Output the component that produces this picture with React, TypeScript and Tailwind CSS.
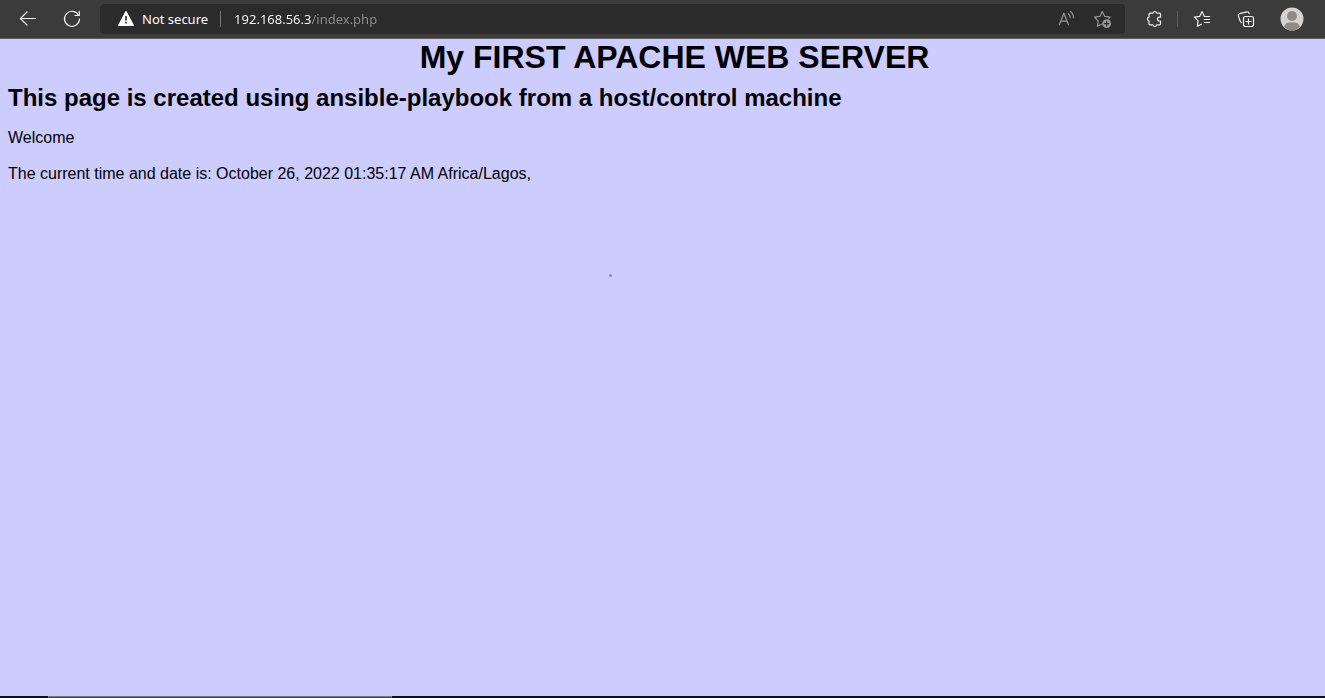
import type { ReactNode } from 'react';

function Icon({ children, size = 24 }: { children: ReactNode; size?: number }) {
  return (
    <svg
      width={size}
      height={size}
      viewBox={`0 0 ${size} ${size}`}
      fill="none"
      stroke="currentColor"
      strokeWidth="1.2"
      strokeLinecap="round"
      strokeLinejoin="round"
      aria-hidden="true"
    >
      {children}
    </svg>
  );
}

function ToolButton({ label, children }: { label: string; children: ReactNode }) {
  return (
    <button type="button" aria-label={label} className="flex h-8 w-10 shrink-0 items-center justify-center rounded text-[#f0f0f0]">
      {children}
    </button>
  );
}

function FieldButton({ label, children }: { label: string; children: ReactNode }) {
  return (
    <button type="button" aria-label={label} className="flex h-7 w-9 shrink-0 items-center justify-center rounded text-[#989898]">
      {children}
    </button>
  );
}

function Toolbar() {
  return (
    <header className="flex h-[39px] items-center border-b border-[#5c5c5c] bg-[#3b3b3b] pr-[13px] pl-2">
      <nav className="flex gap-1">
        <ToolButton label="Back">
          <Icon>
            <path d="M19.5 11.5H4.5M11 5l-6.6 6.5L11 18" />
          </Icon>
        </ToolButton>
        <ToolButton label="Refresh">
          <Icon>
            <path d="M18.6 8.2A7.5 7.5 0 1 0 19.5 12" />
            <path d="M19.3 4.3v4.2h-4.4" />
          </Icon>
        </ToolButton>
      </nav>

      <div className="ml-2 flex h-[30px] min-w-0 flex-1 items-center rounded bg-[#2b2b2b] pr-1">
        <button type="button" className="ml-[14px] flex shrink-0 items-center gap-1 text-[13px] leading-5 text-white">
          <Icon>
            <path d="M12 4.6 19.3 18.4H4.7Z" fill="currentColor" />
            <path d="M12 9v4.6" stroke="#2b2b2b" strokeWidth="1.6" strokeLinecap="butt" />
            <path d="M12 14.8v1.8" stroke="#2b2b2b" strokeWidth="1.6" strokeLinecap="butt" />
          </Icon>
          Not secure
        </button>
        <span className="ml-3 h-4 w-px shrink-0 bg-[#767676]" />
        <input
          type="text"
          aria-label="Address"
          defaultValue="192.168.56.3/index.php"
          className="ml-[13px] h-6 min-w-0 flex-1 bg-linear-to-r from-white from-[77px] to-[#8f8f8f] to-[77px] bg-clip-text text-[13px] leading-5 text-transparent caret-white outline-none"
        />
        <FieldButton label="Read aloud">
          <Icon>
            <path d="M4.4 17.8 8.9 6.2l4.5 11.6M6 14.2h5.8" />
            <path d="M13.2 6.6c1.3.9 2 2.2 2 4M15.4 4.4c2 1.4 3.1 3.6 3.1 6.4" />
          </Icon>
        </FieldButton>
        <FieldButton label="Add this page to favorites">
          <Icon>
            <path d="M10.5 17.2 6.4 19.3l.8-5.3-3.7-3.8 5.3-.8 2.5-4.9 2.5 4.9 5.4.8-1.6 1.6" />
            <circle cx="15.7" cy="16.6" r="4.4" fill="currentColor" stroke="none" />
            <path d="M15.7 14.4v4.4M13.5 16.6h4.4" stroke="#2b2b2b" />
          </Icon>
        </FieldButton>
      </div>

      <div className="ml-[10px] flex items-center">
        <ToolButton label="Extensions">
          <Icon>
            <path d="M7 6.2h2.9a2 2 0 0 1 3.9 0h2.7q1 0 1 1v2.9h-1.1a1.9 1.9 0 0 0 0 3.9h1.1v2.8q0 1-1 1h-2.7a2 2 0 0 1-3.9 0H7q-1 0-1-1V14a2 2 0 0 1 0-3.9V7.2q0-1 1-1Z" />
          </Icon>
        </ToolButton>
        <span className="mr-1 ml-0.5 h-4 w-px shrink-0 bg-[#5a5a5a]" />
        <ToolButton label="Favorites">
          <Icon>
            <path d="M11.4 17.2 7.4 19.2l.7-5.3-3.7-3.7 5.2-.8L12 4.6l2.4 4.9h5.2M14.4 12.5h5.2M14.4 15.5h5.2" />
          </Icon>
        </ToolButton>
        <div className="ml-1 flex gap-1.5">
          <ToolButton label="Collections">
            <Icon>
              <rect x="9.5" y="9.5" width="10" height="10" rx="2" />
              <path d="M14.5 11.8v5.4M11.8 14.5h5.4" />
              <path d="M7.6 15.6q-1-.2-1.4-1.5L4.3 8.7Q4 7.2 5.5 6.7l7.5-1.9q1.7-.3 2.1 1.9" />
            </Icon>
          </ToolButton>
          <ToolButton label="Profile">
            <svg width="24" height="24" viewBox="0 0 24 24" aria-hidden="true">
              <circle cx="12" cy="12" r="11.5" fill="#d6d4d2" />
              <circle cx="12" cy="9" r="5" fill="#8e8a88" />
              <path d="M4.2 20.2c.3-3 2.5-4.7 5-4.7h5.6c2.5 0 4.7 1.7 5 4.7A11.5 11.5 0 0 1 4.2 20.2Z" fill="#8e8a88" />
            </svg>
          </ToolButton>
        </div>
      </div>
    </header>
  );
}

export default function App() {
  return (
    <div className="flex min-h-screen flex-col bg-[#ccccff] font-['Noto_Sans',sans-serif]">
      <Toolbar />
      <main className="relative flex-1 px-2 font-['Liberation_Sans',Arial,sans-serif] text-base text-black">
        <h1 className="pl-6 text-center text-[32px] leading-9 font-bold">My FIRST APACHE WEB SERVER</h1>
        <h2 className="mt-[7px] text-2xl leading-8 font-bold">This page is created using ansible-playbook from a host/control machine</h2>
        <p className="mt-[14px] leading-5">Welcome</p>
        <p className="mt-4 leading-5">The current time and date is: October 26, 2022 01:35:17 AM Africa/Lagos,</p>
        <span className="absolute top-[235px] left-[609px] size-[3px] rounded-full bg-[#8888b4]" />
      </main>
      <footer className="flex h-[2px] bg-[#101014] pl-12">
        <div className="w-[344px] border-x border-t border-[#77777b] bg-[#444446]" />
      </footer>
    </div>
  );
}
